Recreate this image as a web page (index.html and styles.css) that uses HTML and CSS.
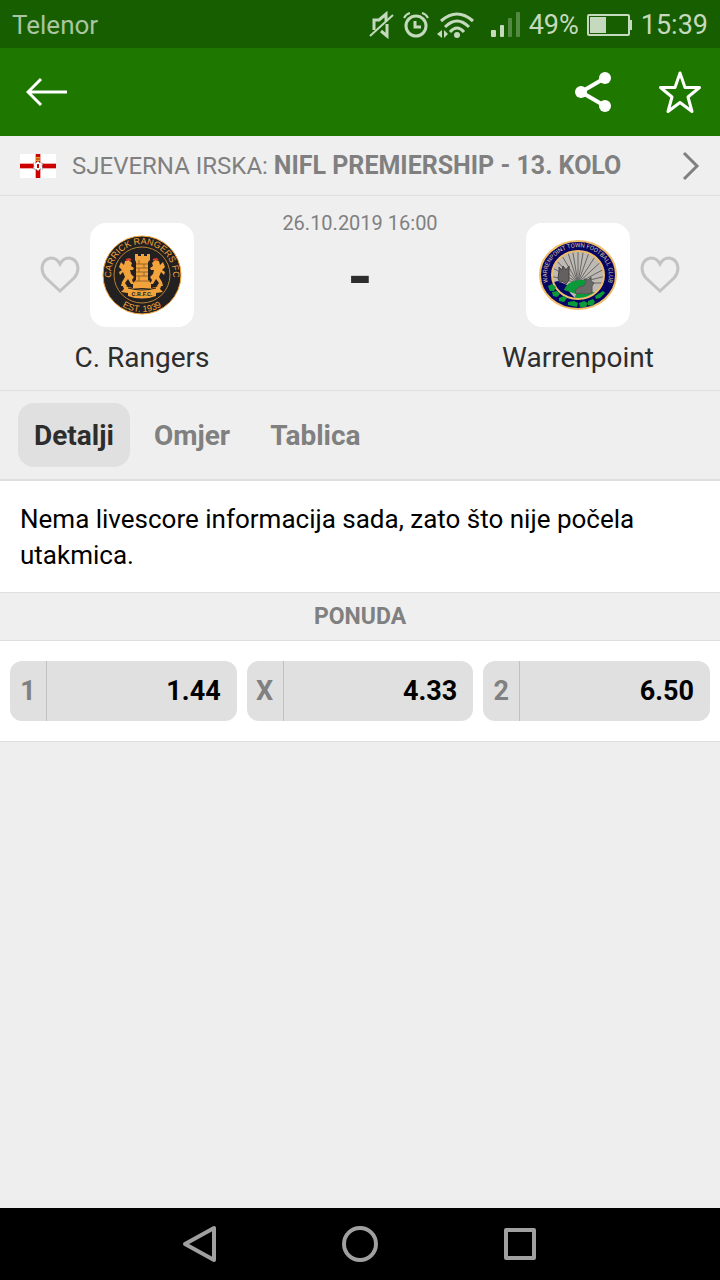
FILE: index.html
```html
<!DOCTYPE html>
<html lang="hr">
<head>
    <meta charset="UTF-8">
    <meta name="viewport" content="width=device-width, initial-scale=1.0">
    <title>C. Rangers - Warrenpoint</title>
    <link rel="stylesheet" href="styles.css">
</head>
<body>

    <!-- Status bar -->
    <div class="status-bar">
        <span class="carrier">Telenor</span>
        <div class="status-icons">
            <svg class="icon-mute" width="26" height="28" viewBox="0 0 26 28" fill="none" stroke="currentColor" stroke-width="2">
                <path d="M5 19V9h5l7-6v7M18 13v12l-6-5" stroke-width="3"/>
                <path d="M1 25L24 4"/>
            </svg>
            <svg class="icon-alarm" width="26" height="28" viewBox="0 0 26 28" fill="none" stroke="currentColor">
                <circle cx="13" cy="15" r="10" stroke-width="3"/>
                <path d="M12 10v6h6" stroke-width="3"/>
                <path d="M1 7q2-4 6-5M25 7q-2-4-6-5" stroke-width="2"/>
            </svg>
            <svg class="icon-wifi" width="38" height="28" viewBox="0 0 38 28" fill="none" stroke="currentColor" stroke-width="3">
                <path d="M4 10q16-14 32 0M8 16q12-12 24 0M13 21q7-8 14 0"/>
                <circle cx="20" cy="24" r="3" fill="currentColor" stroke="none"/>
                <path d="M5 19v8l-5-4zM7 19v8l4-4z" fill="currentColor" stroke="none"/>
            </svg>
            <svg class="icon-signal" width="30" height="26" viewBox="0 0 30 26" fill="currentColor">
                <rect x="0" y="18" width="5" height="7" rx="1"/>
                <rect x="9" y="13" width="4" height="12" rx="1"/>
                <rect x="17" y="6" width="4" height="19" rx="1" opacity="0.35"/>
                <rect x="25" y="0" width="4" height="25" rx="1" opacity="0.35"/>
            </svg>
            <span class="battery-level">49%</span>
            <svg class="icon-battery" width="46" height="22" viewBox="0 0 46 22">
                <rect x="1" y="1" width="41" height="20" rx="1" fill="none" stroke="currentColor" stroke-width="2"/>
                <rect x="3" y="3" width="16" height="16" fill="currentColor"/>
                <rect x="43" y="6" width="2" height="10" fill="currentColor"/>
            </svg>
            <span class="clock">15:39</span>
        </div>
    </div>

    <!-- App bar -->
    <header class="app-bar">
        <button type="button" class="icon-button" aria-label="Natrag">
            <svg width="42" height="30" viewBox="0 0 42 30" fill="none" stroke="currentColor" stroke-width="3">
                <path d="M41 15H2M15 2L2 15l13 13"/>
            </svg>
        </button>
        <div class="app-actions">
            <button type="button" class="icon-button" aria-label="Podijeli">
                <svg width="36" height="40" viewBox="0 0 36 40" fill="currentColor">
                    <path d="M30 6L6 20l24 14" fill="none" stroke="currentColor" stroke-width="4"/>
                    <circle cx="30" cy="6" r="6"/>
                    <circle cx="6" cy="20" r="6"/>
                    <circle cx="30" cy="34" r="6"/>
                </svg>
            </button>
            <button type="button" class="icon-button" aria-label="Dodaj u favorite">
                <svg width="44" height="44" viewBox="0 0 44 44" fill="none" stroke="currentColor" stroke-width="3" stroke-linejoin="round">
                    <path d="M22 3l5 14.500 14.500 0-11.500 9.500 4 14.500-12-9-12 9 4-14.500L2.500 17.500l14.500 0z"/>
                </svg>
            </button>
        </div>
    </header>

    <main class="content">

        <!-- League -->
        <a class="league" href="#liga">
            <svg class="flag" width="36" height="24" viewBox="0 0 36 24">
                <rect width="36" height="24" fill="#fff"/>
                <path d="M18 0v24M0 12h36" stroke="#f3a9a9" stroke-width="6"/>
                <path d="M18 0v24M0 12h36" stroke="#cc0000" stroke-width="4"/>
                <path d="M18 7l2 2 3 0-1 3 1 3-3 0-2 2-2-2-3 0 1-3-1-3 3 0z" fill="#fff" stroke="#777" stroke-width="1" stroke-dasharray="1 1"/>
                <path d="M17 10h2v4h-2z" fill="#cc0000"/>
                <path d="M16 3h4v4h-4z" fill="#e79a1c"/>
                <path d="M16 5h4M18 1v2" stroke="#b62a12"/>
            </svg>
            <span class="league-name">SJEVERNA IRSKA: <strong>NIFL PREMIERSHIP - 13. KOLO</strong></span>
            <svg class="chevron" width="18" height="30" viewBox="0 0 18 30" fill="none" stroke="currentColor" stroke-width="3">
                <path d="M2 2l13 13L2 28"/>
            </svg>
        </a>

        <!-- Match -->
        <section class="match">
            <div class="team home">
                <button type="button" class="heart" aria-label="Prati C. Rangers">
                    <svg width="40" height="38" viewBox="0 0 40 38" fill="none" stroke="currentColor" stroke-width="3">
                        <path d="M20 35L6 22C-1 14 2 3 11 2c4 0 7 2 9 6 2-4 5-6 9-6 9 1 12 12 5 20z"/>
                    </svg>
                </button>
                <div class="crest">
                    <svg viewBox="0 0 104 104">
                        <defs>
                            <path id="carrick-top" d="M22 60a31 31 0 1 1 60 0"/>
                            <path id="carrick-bottom" d="M15 52a37 37 0 0 0 74 0"/>
                        </defs>
                        <circle cx="52" cy="52" r="39" fill="#222020" stroke="#f2a33c" stroke-width="1"/>
                        <circle cx="52" cy="52" r="28" fill="none" stroke="#b98134" stroke-width="1"/>
                        <text class="carrick-text" text-anchor="middle"><textPath href="#carrick-top" startOffset="50%">CARRICK RANGERS FC</textPath></text>
                        <text class="carrick-text" text-anchor="middle"><textPath href="#carrick-bottom" startOffset="50%">EST. 1939</textPath></text>
                        <g fill="#f2a33c">
                            <path d="M45 31h3v2h3v-2h3v2h3v-2h3v6l-2 2v18l3 3v5H43v-5l3-3V39l-1-2z"/>
                            <path id="lion" d="M31 39l3 3 1-4 4-1 3 3-1 3 3 2-1 2-3 0 1 4 3 3-2 3 2 4-3 0-3-5-3 4 2 3-6 0 1-4 3-5-2-5-3 3-1-3 3-2-3-3z"/>
                            <use href="#lion" transform="matrix(-1 0 0 1 104 0)"/>
                            <path d="M32 61l6 3q14 4 28 0l6-3-2 5 3 3-7 1v3q-14 5-28 0v-3l-7-1 3-3z"/>
                        </g>
                        <path d="M46 41h12M46 45h12M46 49h12M46 53h12M45 58h15M49 37v4M54 41v4M49 45v4M54 49v4M49 53v5" stroke="#95652a" stroke-width="1" fill="none"/>
                        <path d="M36 37l3-1 2 1M63 37l3-1 2 1" stroke="#d83a2c" stroke-width="2" fill="none"/>
                        <path d="M38 65q14 4 28 0" stroke="#222020" stroke-width="1" fill="none"/>
                        <text class="carrick-ribbon" x="52" y="73" text-anchor="middle">C.R.F.C.</text>
                    </svg>
                </div>
                <h2 class="team-name">C. Rangers</h2>
            </div>

            <div class="score">
                <time class="kickoff" datetime="2019-10-26T16:00">26.10.2019 16:00</time>
                <div class="result">-</div>
            </div>

            <div class="team away">
                <div class="crest">
                    <svg viewBox="0 0 104 104">
                        <defs>
                            <path id="warren-ring" d="M25 66A31 28 0 1 1 79 66"/>
                            <clipPath id="warren-field"><ellipse cx="52" cy="52" rx="25" ry="23"/></clipPath>
                        </defs>
                        <ellipse cx="52" cy="52" rx="38" ry="34" fill="#060564" stroke="#f0bd68" stroke-width="2"/>
                        <text class="warren-text" text-anchor="middle"><textPath href="#warren-ring" startOffset="50%">WARRENPOINT TOWN FOOTBALL CLUB</textPath></text>
                        <ellipse cx="52" cy="52" rx="26" ry="24" fill="#beb9b2" stroke="#f0bd68" stroke-width="2"/>
                        <g clip-path="url(#warren-field)">
                            <path d="M52 60L20 52M52 60L22 42M52 60L25 32M52 60L32 26M52 60L40 24M52 60L46 24M52 60V24M52 60L58 24M52 60L65 24M52 60L74 26M52 60L80 34M52 60L84 43M52 60L84 52M52 60L84 60" stroke="#666" stroke-width="1"/>
                            <path d="M24 60l8-2 9 4 3 8 10 10H36z" fill="#060564"/>
                            <path d="M38 67c3-8 11-10 19-10 8 0 9 4 3 6-4 2-4 5 6 6l12 0-8 8H48l2-6z" fill="#0b9a3a"/>
                            <path d="M33 48l0-4 3 3 1-4 3 4 3-4 0 6 0 8-3 4-4-3-2 2-2-5z" fill="#62615f" stroke="#444" stroke-width="1"/>
                            <path d="M49 68q3-5 9-5l2-4-2-3 4 1 3-3 0 4 3 2-2 3 0 7-7 1-2-1-7 1z" fill="#6b6968" stroke="#555" stroke-width="1"/>
                        </g>
                        <path d="M22 63l4-2 4 3-2 4-4 0zM26 69l5-1 3 3-3 3-4-1zM33 75l5-2 3 2-3 4-5-1zM42 79l6-1 4 2-1 4-9-2zM53 80l5-2 4 2-2 4-6 0zM62 78l5-2 2 3-3 4-4-1zM69 73l8-5 2 2-5 5-4 1z" fill="#0b9a3a"/>
                    </svg>
                </div>
                <button type="button" class="heart" aria-label="Prati Warrenpoint">
                    <svg width="40" height="38" viewBox="0 0 40 38" fill="none" stroke="currentColor" stroke-width="3">
                        <path d="M20 35L6 22C-1 14 2 3 11 2c4 0 7 2 9 6 2-4 5-6 9-6 9 1 12 12 5 20z"/>
                    </svg>
                </button>
                <h2 class="team-name">Warrenpoint</h2>
            </div>
        </section>

        <!-- Tabs -->
        <nav class="tabs">
            <button type="button" class="tab active">Detalji</button>
            <button type="button" class="tab">Omjer</button>
            <button type="button" class="tab">Tablica</button>
        </nav>

        <p class="notice">Nema livescore informacija sada, zato što nije počela utakmica.</p>

        <!-- Odds -->
        <h3 class="section-title">PONUDA</h3>
        <div class="odds">
            <button type="button" class="odd"><span class="odd-label">1</span><span class="odd-value">1.44</span></button>
            <button type="button" class="odd"><span class="odd-label">X</span><span class="odd-value">4.33</span></button>
            <button type="button" class="odd"><span class="odd-label">2</span><span class="odd-value">6.50</span></button>
        </div>
    </main>

    <!-- System navigation -->
    <div class="system-nav">
        <button type="button" class="nav-button" aria-label="Back">
            <svg width="40" height="40" viewBox="0 0 40 40" fill="none" stroke="currentColor" stroke-width="4" stroke-linejoin="round">
                <path d="M34 4v32L5 20z"/>
            </svg>
        </button>
        <button type="button" class="nav-button" aria-label="Home">
            <svg width="40" height="40" viewBox="0 0 40 40" fill="none" stroke="currentColor" stroke-width="4">
                <circle cx="20" cy="20" r="16"/>
            </svg>
        </button>
        <button type="button" class="nav-button" aria-label="Recent">
            <svg width="40" height="40" viewBox="0 0 40 40" fill="none" stroke="currentColor" stroke-width="4" stroke-linejoin="round">
                <rect x="6" y="6" width="28" height="28"/>
            </svg>
        </button>
    </div>

</body>
</html>
```
FILE: styles.css
```css
* {
    box-sizing: border-box;
}

body {
    font-family: Roboto, "Liberation Sans", sans-serif;
    background-color: #eeeeee;
    color: #2d2d2d;
    margin: 0;
    min-height: 100vh;
    display: flex;
    flex-direction: column;
}

button {
    font-family: inherit;
    background: none;
    border: none;
    margin: 0;
    padding: 0;
    cursor: pointer;
}

svg {
    display: block;
    flex-shrink: 0;
}

.status-bar {
    display: flex;
    justify-content: space-between;
    align-items: center;
    height: 48px;
    padding: 2px 12px 0;
    background-color: #165e00;
    color: #c5d9bf;
    font-size: 27px;
}

.carrier {
    color: #a9c5a1;
    font-size: 26px;
}

.status-icons {
    display: flex;
    align-items: center;
    gap: 8px;
}

.icon-signal {
    margin-left: 8px;
}

.app-bar {
    display: flex;
    justify-content: space-between;
    align-items: center;
    height: 88px;
    padding: 0 18px 0 26px;
    background-color: #1e7800;
}

.icon-button {
    color: #fff;
}

.app-actions {
    display: flex;
    align-items: center;
    gap: 47px;
}

.content {
    flex: 1;
}

.league {
    display: flex;
    align-items: center;
    gap: 16px;
    height: 60px;
    padding: 0 20px;
    background-color: #efefef;
    border-bottom: 1px solid #dfdfdf;
    color: #808080;
    font-size: 24px;
    text-decoration: none;
}

.league-name {
    flex: 1;
}

.league-name strong {
    font-size: 25px;
}

.match {
    display: flex;
    justify-content: space-between;
    padding: 12px 40px 14px;
    background-color: #efefef;
    border-bottom: 1px solid #dfdfdf;
}

.team {
    display: grid;
    grid-template-columns: 40px 104px 40px;
    column-gap: 10px;
    row-gap: 13px;
    padding-top: 15px;
    align-items: center;
}

.crest {
    grid-column: 2;
    height: 104px;
    border-radius: 16px;
    background-color: #fff;
}

.heart {
    color: #c3c3c3;
}

.team-name {
    grid-column: 1 / -1;
    margin: 0;
    font-size: 28px;
    line-height: 36px;
    font-weight: normal;
    text-align: center;
}

.carrick-text {
    font-size: 9px;
    font-family: "Liberation Sans", sans-serif;
    fill: #f2a33c;
}

.carrick-ribbon {
    font-size: 6px;
    font-weight: bold;
    fill: #222020;
}

.warren-text {
    font-size: 6px;
    fill: #d6c6a4;
}

.score {
    text-align: center;
}

.kickoff {
    display: block;
    font-size: 20px;
    line-height: 30px;
    color: #808080;
}

.result {
    font-size: 64px;
    line-height: 80px;
    font-weight: bold;
}

.tabs {
    display: flex;
    gap: 8px;
    padding: 12px 18px;
    background-color: #efefef;
    border-bottom: 2px solid #dfdfdf;
}

.tab {
    height: 64px;
    padding: 0 16px;
    border-radius: 16px;
    font-size: 28px;
    font-weight: bold;
    color: #808080;
}

.tab.active {
    background-color: #e0e0e0;
    color: #2d2d2d;
}

.notice {
    margin: 0;
    padding: 20px 20px 19px;
    background-color: #fff;
    color: #000;
    font-size: 26px;
    line-height: 36px;
}

.section-title {
    margin: 0;
    background-color: #efefef;
    border-top: 1px solid #dfdfdf;
    border-bottom: 1px solid #dfdfdf;
    color: #808080;
    font-size: 23px;
    line-height: 47px;
    text-align: center;
}

.odds {
    display: grid;
    grid-template-columns: repeat(3, 1fr);
    gap: 10px;
    padding: 20px 10px;
    background-color: #fff;
    border-bottom: 1px solid #dfdfdf;
}

.odd {
    display: flex;
    height: 60px;
    border-radius: 12px;
    background-color: #e0e0e0;
    color: #000;
    font-size: 27px;
    line-height: 60px;
    font-weight: bold;
}

.odd-label {
    width: 37px;
    border-right: 1px solid #c0c0c0;
    color: #808080;
    text-align: center;
}

.odd-value {
    flex: 1;
    padding-right: 16px;
    text-align: right;
}

.system-nav {
    display: flex;
    justify-content: center;
    align-items: center;
    gap: 120px;
    height: 72px;
    background-color: #000;
}

.nav-button {
    color: #a0a0a0;
}
```
